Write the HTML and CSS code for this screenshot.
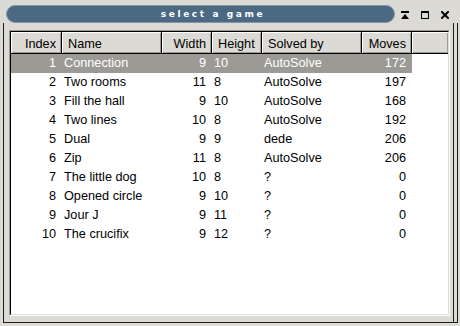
FILE: index.html
```html
<!DOCTYPE html>
<html>
<head>
<meta charset="utf-8">
<link rel="stylesheet" href="styles.css">
</head>
<body>
<div class="win">
  <div class="titlebar">
    <div class="pill"><span class="title">select a game</span></div>
    <svg class="btn shade" width="8" height="8" viewBox="0 0 8 8"><rect x="0" y="0" width="8" height="2"/><polygon points="0,8 8,8 4,3"/></svg>
    <svg class="btn max" width="8" height="8" viewBox="0 0 8 8"><path d="M0 0H8V8H0Z M1 2V7H7V2Z" fill-rule="evenodd"/></svg>
    <svg class="btn close" width="8" height="8" viewBox="0 0 8 8"><path d="M1 1L7 7M7 1L1 7" stroke="#000" stroke-width="2" stroke-linecap="square"/></svg>
  </div>
  <div class="deco">
    <div class="client">
      <div class="scroll">
        <div class="scroll-in">
          <div class="tree">
            <div class="row hdr">
              <div class="cell c1 r">Index</div>
              <div class="cell c2">Name</div>
              <div class="cell c3 r">Width</div>
              <div class="cell c4">Height</div>
              <div class="cell c5">Solved by</div>
              <div class="cell c6 r">Moves</div>
              <div class="cell c7"></div>
            </div>
            <div class="row sel">
              <div class="cell c1 r">1</div><div class="cell c2">Connection</div><div class="cell c3 r">9</div><div class="cell c4">10</div><div class="cell c5">AutoSolve</div><div class="cell c6 r">172</div><div class="cell c7"></div>
            </div>
            <div class="row">
              <div class="cell c1 r">2</div><div class="cell c2">Two rooms</div><div class="cell c3 r">11</div><div class="cell c4">8</div><div class="cell c5">AutoSolve</div><div class="cell c6 r">197</div><div class="cell c7"></div>
            </div>
            <div class="row">
              <div class="cell c1 r">3</div><div class="cell c2">Fill the hall</div><div class="cell c3 r">9</div><div class="cell c4">10</div><div class="cell c5">AutoSolve</div><div class="cell c6 r">168</div><div class="cell c7"></div>
            </div>
            <div class="row">
              <div class="cell c1 r">4</div><div class="cell c2">Two lines</div><div class="cell c3 r">10</div><div class="cell c4">8</div><div class="cell c5">AutoSolve</div><div class="cell c6 r">192</div><div class="cell c7"></div>
            </div>
            <div class="row">
              <div class="cell c1 r">5</div><div class="cell c2">Dual</div><div class="cell c3 r">9</div><div class="cell c4">9</div><div class="cell c5">dede</div><div class="cell c6 r">206</div><div class="cell c7"></div>
            </div>
            <div class="row">
              <div class="cell c1 r">6</div><div class="cell c2">Zip</div><div class="cell c3 r">11</div><div class="cell c4">8</div><div class="cell c5">AutoSolve</div><div class="cell c6 r">206</div><div class="cell c7"></div>
            </div>
            <div class="row">
              <div class="cell c1 r">7</div><div class="cell c2">The little dog</div><div class="cell c3 r">10</div><div class="cell c4">8</div><div class="cell c5">?</div><div class="cell c6 r">0</div><div class="cell c7"></div>
            </div>
            <div class="row">
              <div class="cell c1 r">8</div><div class="cell c2">Opened circle</div><div class="cell c3 r">9</div><div class="cell c4">10</div><div class="cell c5">?</div><div class="cell c6 r">0</div><div class="cell c7"></div>
            </div>
            <div class="row">
              <div class="cell c1 r">9</div><div class="cell c2">Jour J</div><div class="cell c3 r">9</div><div class="cell c4">11</div><div class="cell c5">?</div><div class="cell c6 r">0</div><div class="cell c7"></div>
            </div>
            <div class="row">
              <div class="cell c1 r">10</div><div class="cell c2">The crucifix</div><div class="cell c3 r">9</div><div class="cell c4">12</div><div class="cell c5">?</div><div class="cell c6 r">0</div><div class="cell c7"></div>
            </div>
          </div>
        </div>
      </div>
    </div>
  </div>
</div>
</body>
</html>
```
FILE: styles.css
```css
html, body {
  margin: 0;
  padding: 0;
  background: #dcdad5;
}
body {
  font-family: "Liberation Sans", Arial, sans-serif;
}
.win {
  width: 460px;
  height: 326px;
  background: #dcdad5;
  overflow: hidden;
}
.titlebar {
  display: flex;
  align-items: flex-start;
  height: 23px;
}
.pill {
  margin: 5px 0 0 6px;
  width: 389px;
  height: 18px;
  box-sizing: border-box;
  border-radius: 9px;
  background: #4b6983;
  border: 1px solid #8597a8;
  display: flex;
  justify-content: center;
  align-items: center;
  padding-left: 25px;
}
.title {
  color: #fff;
  font-family: "DejaVu Sans", sans-serif;
  font-weight: bold;
  font-size: 9px;
  letter-spacing: 2.6px;
  line-height: 1;
}
.btn {
  display: block;
  margin-top: 11px;
  width: 8px;
  height: 8px;
  fill: #000;
}
.btn.shade {
  margin-left: 6px;
}
.btn + .btn {
  margin-left: 12px;
}
.deco {
  margin-left: 3px;
  width: 455px;
  height: 300px;
  box-sizing: border-box;
  border: 1px solid #1c1c1c;
  border-top: none;
  display: flex;
}
.client {
  width: 450px;
  box-sizing: border-box;
  border-right: 1px solid #1c1c1c;
  padding: 7px 0 0 5px;
}
.scroll {
  width: 441px;
  height: 286px;
  box-sizing: border-box;
  border: 1px solid;
  border-color: #9d9b94 #ffffff #ffffff #9d9b94;
}
.scroll-in {
  height: 100%;
  box-sizing: border-box;
  border: 1px solid;
  border-color: #000000 #dcdad5 #dcdad5 #000000;
}
.tree {
  height: 100%;
  background: #fff;
}
.row {
  display: flex;
  height: 19px;
  line-height: 19px;
  font-size: 12.7px;
  color: #000;
}
.cell {
  box-sizing: border-box;
  padding: 0 2px;
  white-space: nowrap;
  overflow: hidden;
}
.cell.r {
  text-align: right;
  padding: 0 6px 0 0;
}
.c1 { width: 51px; }
.c2 { width: 100px; }
.c3 { width: 50px; }
.c4 { width: 50px; }
.c5 { width: 100px; }
.c6 { width: 50px; }
.c7 { flex: 1; }
.hdr {
  height: 22px;
}
.hdr .cell {
  height: 22px;
  background: #dcdad5;
  border-right: 1px solid #000;
  border-bottom: 1px solid #000;
  box-shadow: inset 1px 1px 0 #fff, inset -1px -1px 0 #9d9b94;
  padding: 3px 5px 0 6px;
  line-height: 18px;
}
.hdr .cell.c7 {
  border-right: none;
}
.sel .cell:not(.c7) {
  background: #9c9a95;
  color: #fff;
}
```
